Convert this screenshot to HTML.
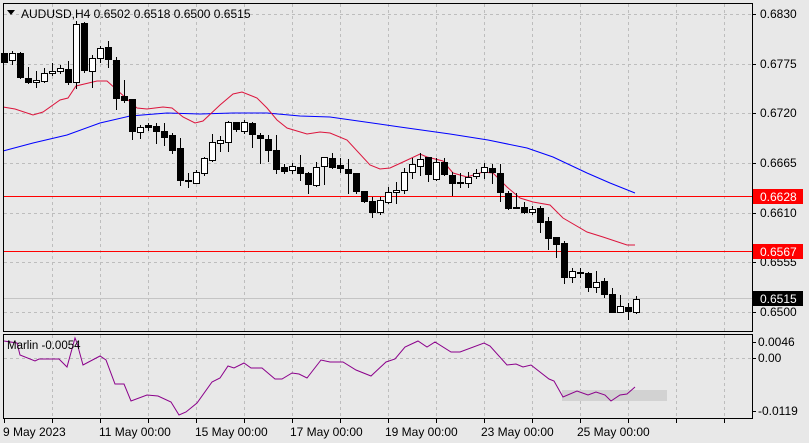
<!DOCTYPE html>
<html><head><meta charset="utf-8"><style>
html,body{margin:0;padding:0;background:#e8e8e8;}
svg{display:block;font-family:"Liberation Sans",sans-serif;}
</style></head><body>
<svg id="s" width="809" height="443" xmlns="http://www.w3.org/2000/svg">
<rect width="809" height="443" fill="#e8e8e8"/>
<g id="grid" stroke="#bdbdbd" stroke-dasharray="3,3" stroke-width="1"></g>
<line x1="3" y1="196.5" x2="752" y2="196.5" stroke="#ff0000"/>
<line x1="3" y1="251.5" x2="752" y2="251.5" stroke="#ff0000"/>
<line x1="3" y1="298.5" x2="752" y2="298.5" stroke="#c4c4c4"/>
<polyline fill="none" stroke="#0000ff" stroke-width="1" points="3,151 33,143 67,135 100,123 130,116 167,113 200,114 233,113 267,113 300,116 330,117 400,127 450,134 488,140 527,148 553,157 587,173 610,183 635,193"/>
<polyline fill="none" stroke="#dc143c" stroke-width="1" points="3,107 15,109 33,115 43,112 60,100 68,98 76,86 97,81 107,81 117,90 137,108 147,109 163,107 172,108 183,117 195,123 203,121 220,105 233,94 242,92 257,98 267,108 277,120 287,128 307,134 320,132 330,133 347,140 370,165 380,169 390,168 403,162 420,154 427,157 443,161 453,173 467,177 483,172 493,173 507,187 520,198 533,202 550,205 563,218 587,232 603,237 627,245 635,245"/>
<g id="candles"></g>
<rect x="3.5" y="3.5" width="749" height="328" fill="none" stroke="#000"/>
<rect x="3.5" y="334.5" width="749" height="84" fill="none" stroke="#000"/>
<rect x="562" y="390" width="105" height="11" fill="#d2d2d2"/>
<polyline fill="none" stroke="#8b008b" stroke-width="1" points="4,341 17,343 20,355 35,361 39,359 59,359 67,367 75,338 77,343 83,365 100,356 106,360 115,384 124,384 131,401 147,395 158,396 171,402 179,415 186,412 197,403 212,382 220,378 228,366 234,368 244,363 251,368 262,368 275,379 282,379 292,373 299,374 307,378 321,360 330,362 343,362 356,370 371,376 386,362 395,359 405,347 418,341 427,347 435,342 451,352 460,352 484,343 490,346 507,365 516,364 523,367 531,365 549,379 554,381 563,397 577,391 588,395 596,392 605,395 611,401 620,395 627,394 635,387"/>
<path d="M7,10 L15,10 L11,15 Z" fill="#000"/>
<text x="21" y="18" font-size="12" fill="#000">AUDUSD,H4  0.6502 0.6518 0.6500 0.6515</text>
<text x="7" y="349" font-size="11.5" fill="#000">Marlin -0.0054</text>
<g id="axis" font-size="12" fill="#000"></g>
<rect x="753" y="189" width="50" height="15" fill="#ff0000"/>
<text x="760" y="201" font-size="12" fill="#fff">0.6628</text>
<rect x="753" y="244" width="50" height="15" fill="#ff0000"/>
<text x="760" y="256" font-size="12" fill="#fff">0.6567</text>
<rect x="753" y="291" width="50" height="15" fill="#000"/>
<text x="760" y="303" font-size="12" fill="#fff">0.6515</text>
</svg>
<script>
var NS="http://www.w3.org/2000/svg";
function el(p,t,a,txt){var e=document.createElementNS(NS,t);for(var k in a)e.setAttribute(k,a[k]);if(txt)e.textContent=txt;p.appendChild(e);return e;}
var g=document.getElementById("grid");
for(var x=52;x<752;x+=48){el(g,"line",{x1:x+.5,y1:4,x2:x+.5,y2:331});el(g,"line",{x1:x+.5,y1:335,x2:x+.5,y2:418});}
[14,64,113,163,213,262,312].forEach(function(y){el(g,"line",{x1:4,y1:y+.5,x2:752,y2:y+.5});});
el(g,"line",{x1:4,y1:358.5,x2:752,y2:358.5});
var ax=document.getElementById("axis");
[["0.6830",14],["0.6775",64],["0.6720",113],["0.6665",163],["0.6610",213],["0.6555",262],["0.6500",312]].forEach(function(a){el(ax,"line",{x1:752,y1:a[1]+.5,x2:756,y2:a[1]+.5,stroke:"#000"});el(ax,"text",{x:760,y:a[1]+4},a[0]);});
[["0.0046",342],["0.00",358],["-0.0119",411]].forEach(function(a){el(ax,"line",{x1:752,y1:a[1]+.5,x2:756,y2:a[1]+.5,stroke:"#000"});el(ax,"text",{x:758,y:a[1]+4},a[0]);});
[["9 May 2023",3],["11 May 00:00",99],["15 May 00:00",195],["17 May 00:00",290],["19 May 00:00",385],["23 May 00:00",481],["25 May 00:00",577]].forEach(function(a,i){el(ax,"text",{x:a[1],y:436},a[0]);});
for(var x=4;x<752;x+=48){el(ax,"line",{x1:x+.5,y1:419,x2:x+.5,y2:423,stroke:"#000"});}
// [type(1 white,0 black), bodyTop, bodyBot, high, low]
var C=[[0,53,62,53,62],[1,53,60,51,64],[0,53,77,52,78],[0,78,82,67,83],[1,80,82,71,87],[1,73,81,68,82],[1,71,73,63,75],[1,68,71,65,73],[0,69,82,61,84],[1,24,82,21,88],[0,23,70,22,72],[1,58,71,55,87],[1,48,58,46,62],[0,47,59,41,67],[0,60,98,57,109],[0,96,100,80,102],[0,99,131,99,139],[1,127,132,125,138],[0,125,127,123,130],[0,126,131,123,143],[0,131,137,123,145],[0,135,150,133,153],[0,148,180,138,185],[0,180,181,173,187],[1,172,183,170,183],[1,158,173,157,175],[1,142,160,134,161],[1,140,143,136,151],[1,122,142,121,151],[0,122,129,122,131],[1,122,131,120,133],[0,123,134,122,147],[0,135,138,133,163],[0,139,150,135,161],[0,150,169,135,173],[0,167,171,164,173],[1,166,170,163,173],[0,167,173,155,180],[0,173,184,172,193],[1,167,185,162,186],[1,157,166,157,184],[0,158,167,153,168],[0,165,168,158,172],[0,169,173,159,193],[0,173,191,173,193],[0,191,201,191,202],[0,201,212,197,217],[1,200,212,197,214],[1,192,202,187,203],[1,190,192,182,203],[1,172,190,168,193],[1,164,172,158,178],[1,159,166,153,175],[0,157,174,157,181],[1,162,179,158,180],[0,162,174,158,175],[0,175,183,172,195],[0,182,183,173,187],[1,177,183,172,187],[1,173,176,169,178],[1,167,172,163,178],[0,168,172,164,183],[0,173,192,164,201],[0,193,208,191,209],[0,207,208,193,208],[0,207,212,202,213],[1,209,212,206,214],[0,208,222,206,232],[0,221,238,217,249],[0,237,244,237,257],[0,243,277,241,283],[1,271,277,268,282],[0,272,273,268,277],[0,273,287,272,291],[1,282,287,271,292],[0,281,294,278,297],[0,294,312,288,312],[1,306,312,295,312],[0,307,311,303,319],[1,299,312,296,313]];
var cg=document.getElementById("candles");
C.forEach(function(c,i){var x=4+8*i;
el(cg,"line",{x1:x+.5,y1:c[3],x2:x+.5,y2:c[4]+1,stroke:"#000"});
var h=Math.max(c[2]-c[1],1);
if(c[0]) el(cg,"rect",{x:x-2.5,y:c[1]+.5,width:6,height:h,fill:"#fff",stroke:"#000"});
else el(cg,"rect",{x:x-3,y:c[1],width:7,height:h+1,fill:"#000"});
});
</script>
</body></html>
